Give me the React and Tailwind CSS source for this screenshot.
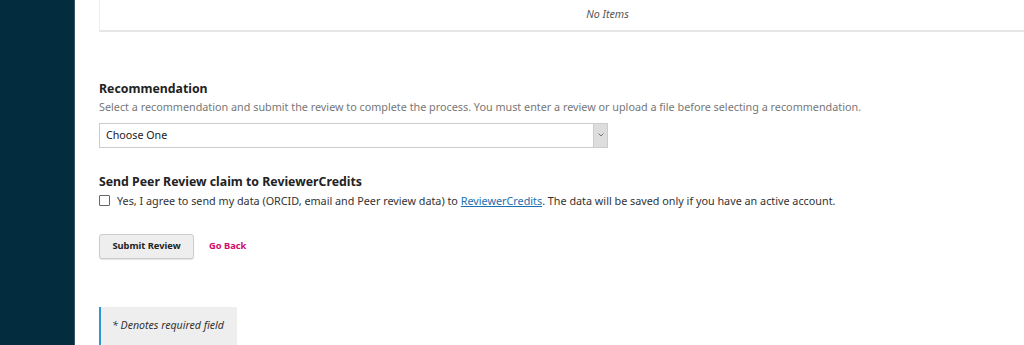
import React from 'react';

export default function App() {
    return (
        <div className="flex w-[1024px] h-[345px] overflow-hidden bg-white font-['Noto_Sans',sans-serif] text-[#222]">
            {/* Sidebar */}
            <aside className="w-[75px] shrink-0 bg-[#032c3e] border-r border-[#3a5666]"></aside>

            <main className="flex flex-col pl-[24px] shrink-0">
                {/* review files list (bottom edge) */}
                <div className="w-[1016px] h-[33px] bg-white border-l border-[#eee] border-b-2 border-b-[#e5e5e5] flex items-center justify-center">
                    <p className="text-[10.7px] italic text-[#555] -mt-[2px]">No Items</p>
                </div>

                {/* Recommendation */}
                <section className="mt-[48px]">
                    <h2 className="text-[12.3px] font-bold leading-[18px] text-[#222]">Recommendation</h2>
                    <p className="text-[10.8px] leading-[18px] text-[#777]">
                        Select a recommendation and submit the review to complete the process. You must enter a review or upload a file before selecting a recommendation.
                    </p>
                    <div className="mt-[7px] w-[509px] h-[25px] flex border border-[#ccc] bg-white">
                        <span className="flex-1 pl-[6px] text-[10.7px] leading-[23px] text-[#222]">Choose One</span>
                        <span className="w-[14px] bg-[#ddd] border-l border-[#ccc] flex items-center justify-center">
                            <svg width="6" height="4" viewBox="0 0 6 4" fill="none">
                                <path d="M0.5 0.5 L3 3 L5.5 0.5" stroke="#777" strokeWidth="1" />
                            </svg>
                        </span>
                    </div>
                </section>

                {/* ReviewerCredits */}
                <section className="mt-[25px]">
                    <h2 className="text-[12.3px] font-bold leading-[18px] text-[#222]">Send Peer Review claim to ReviewerCredits</h2>
                    <label className="flex items-center mt-[1px]">
                        <span className="w-[11px] h-[11px] border border-[#666] rounded-[1px] bg-white"></span>
                        <span className="ml-[7px] text-[10.8px] leading-[18px] text-[#333]">
                            Yes, I agree to send my data (ORCID, email and Peer review data) to{' '}
                            <a className="text-[#1c6fb0] underline">ReviewerCredits</a>. The data will be saved only if you have an active account.
                        </span>
                    </label>
                </section>

                {/* Actions */}
                <div className="flex items-center mt-[24px]">
                    <button className="w-[95px] h-[25px] rounded-[3px] border border-[#ccc] bg-[#eee] shadow-[0_1px_1px_rgba(0,0,0,0.1)] text-[9.3px] font-bold text-[#222]">
                        Submit Review
                    </button>
                    <a className="ml-[15px] text-[9.3px] font-bold text-[#d00a6c]">Go Back</a>
                </div>

                {/* Required note */}
                <div className="mt-[48px] w-[138px] h-[40px] bg-[#eee] border-l-[2px] border-[#2a96d2] flex items-center pl-[11px]">
                    <p className="text-[10.6px] italic text-[#333]">* Denotes required field</p>
                </div>
            </main>
        </div>
    );
}
